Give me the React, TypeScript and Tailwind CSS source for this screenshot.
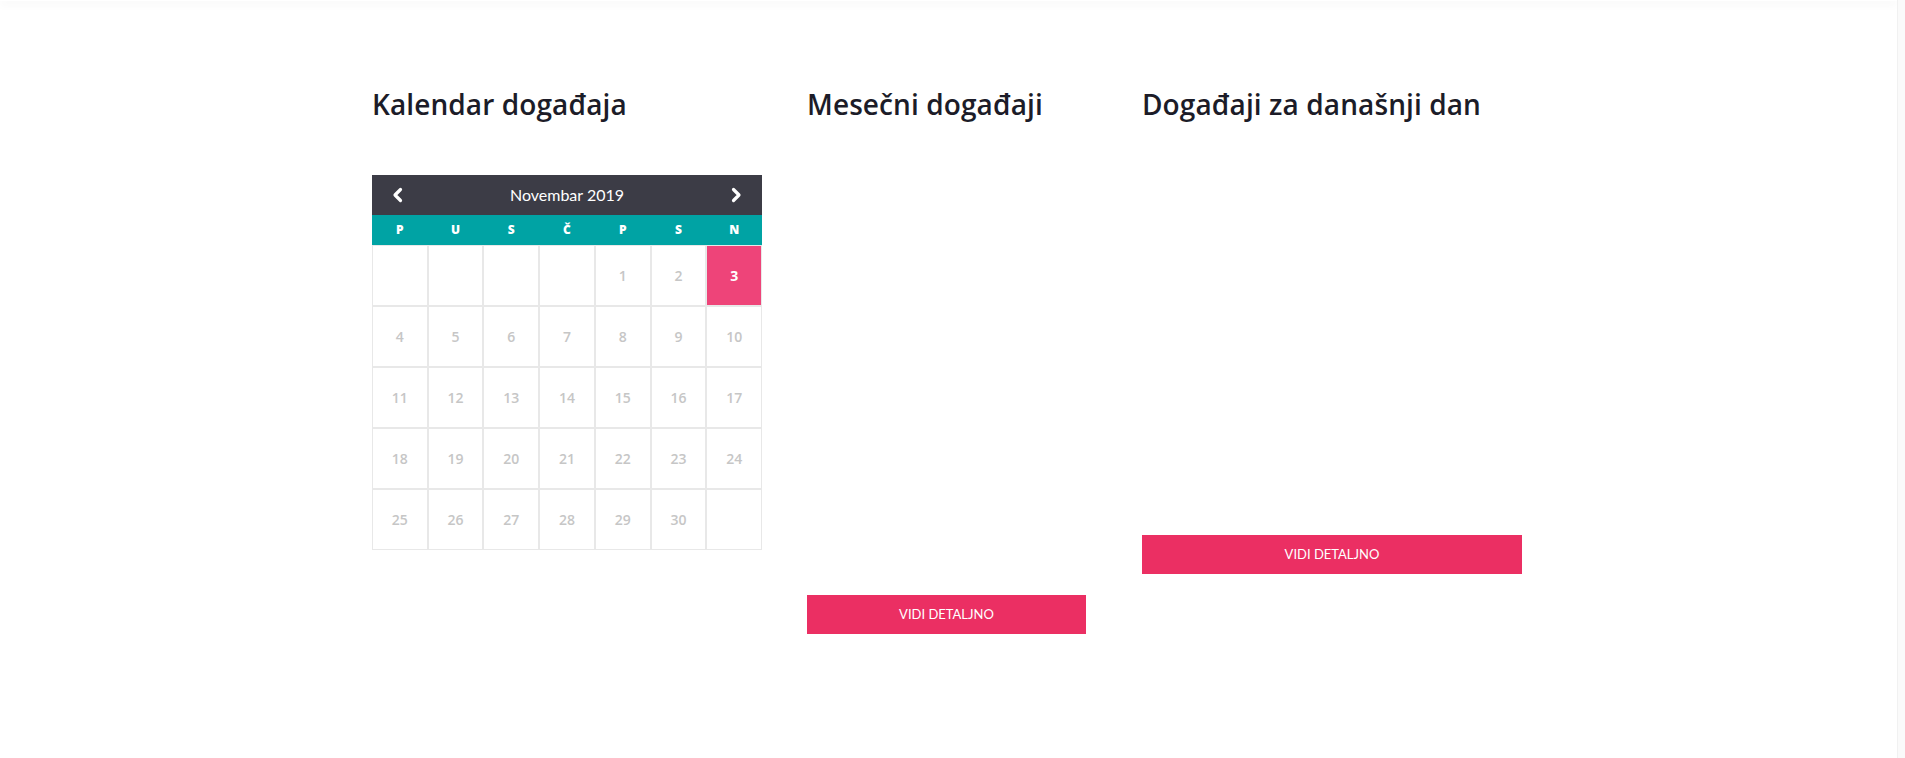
import React from "react";

const heading = "font-['Open_Sans','Noto_Sans',sans-serif] font-semibold text-[28px] leading-[36px] text-[#1c1c28] tracking-[0.1px]";
const lato = "font-['Lato','Open_Sans',sans-serif]";
const pop = "font-['Open_Sans','Noto_Sans',sans-serif]";

const days = ["P", "U", "S", "Č", "P", "S", "N"];
const cells: (number | null)[] = [
  null, null, null, null, 1, 2, 3,
  4, 5, 6, 7, 8, 9, 10,
  11, 12, 13, 14, 15, 16, 17,
  18, 19, 20, 21, 22, 23, 24,
  25, 26, 27, 28, 29, 30, null,
];

function Chevron({ dir }: { dir: "l" | "r" }) {
  return (
    <svg width="12" height="16" viewBox="0 0 12 16" fill="none">
      <polyline
        points={dir === "l" ? "8.5,2.5 3,8 8.5,13.5" : "3.5,2.5 9,8 3.5,13.5"}
        stroke="white"
        strokeWidth="3.2"
        strokeLinecap="round"
        strokeLinejoin="round"
      />
    </svg>
  );
}

function Calendar() {
  return (
    <div className="w-[390px]">
      <div className="h-[40px] bg-[#3c3c46] flex items-center justify-between px-[20px]">
        <Chevron dir="l" />
        <span className={`${lato} text-[16px] text-white`}>Novembar 2019</span>
        <Chevron dir="r" />
      </div>
      <div className="h-[30px] bg-[#00a3a4] grid grid-cols-7 items-center">
        {days.map((d, i) => (
          <div key={i} className={`${pop} text-center text-white font-extrabold text-[12px]`}>{d}</div>
        ))}
      </div>
      <div className="grid grid-cols-7">
        {cells.map((c, i) => (
          <div key={i} className="h-[61px] border border-[#e8e8e8] flex">
            {c === 3 ? (
              <div className={`${pop} flex-1 bg-[#ee4479] text-white font-bold text-[14px] flex items-center justify-center`}>3</div>
            ) : (
              <div className={`${pop} flex-1 text-[#c6c6c6] font-semibold text-[14px] flex items-center justify-center`}>{c ?? ""}</div>
            )}
          </div>
        ))}
      </div>
    </div>
  );
}

function Button({ w }: { w: string }) {
  return (
    <div className={`${w} h-[39px] bg-[#eb2f63] flex items-center justify-center`}>
      <span className={`${lato} text-white text-[13px]`}>VIDI DETALJNO</span>
    </div>
  );
}

export default function App() {
  return (
    <div className="min-h-[758px] bg-white relative overflow-hidden">
      <div className="h-px bg-white shadow-[0_2px_8px_rgba(0,0,0,0.18)] mr-[8px]" />
      <div className="absolute right-0 top-0 bottom-0 w-[8px] border-l border-[#f1f1f1] bg-[#fafafa]" />
      <div className="flex pl-[372px] pt-[85px]">
        <div className="w-[390px]">
          <h2 className={heading}>Kalendar događaja</h2>
          <div className="mt-[53px]">
            <Calendar />
          </div>
        </div>
        <div className="ml-[45px] w-[279px]">
          <h2 className={heading}>Mesečni događaji</h2>
          <div className="mt-[473px]">
            <Button w="w-[279px]" />
          </div>
        </div>
        <div className="ml-[56px] w-[380px]">
          <h2 className={heading}>Događaji za današnji dan</h2>
          <div className="mt-[413px]">
            <Button w="w-[380px]" />
          </div>
        </div>
      </div>
    </div>
  );
}
